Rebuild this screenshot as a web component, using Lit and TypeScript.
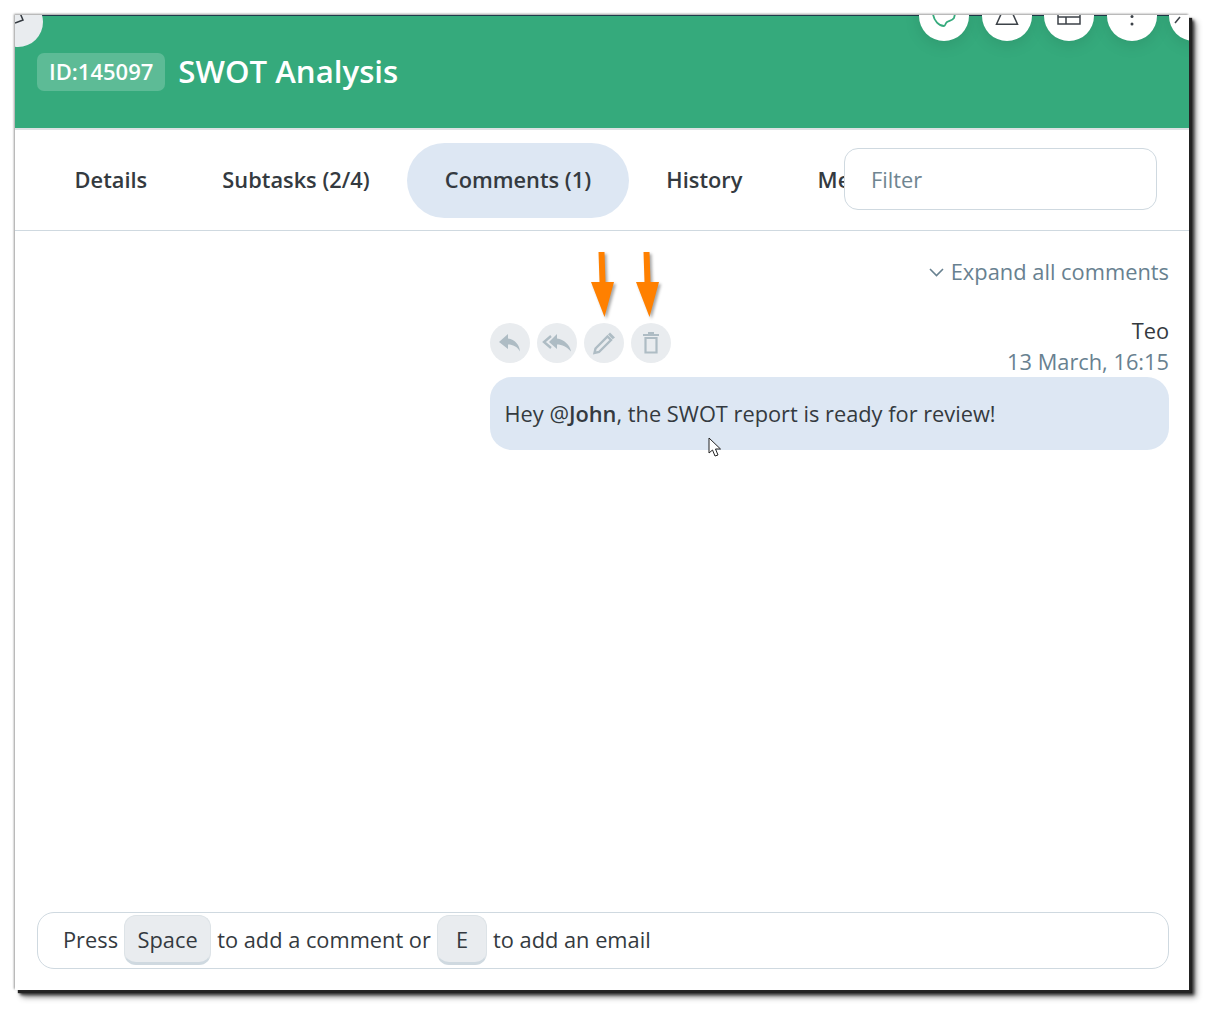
import { LitElement, html, css, svg } from "lit";
import { customElement } from "lit/decorators.js";

const circle = (cx: number, inner: unknown) => html`<span class="round" style="left:${cx}px">${inner}</span>`;

@customElement("app-root")
export class AppRoot extends LitElement {
  static styles = css`
    :host { display: block; height: 1017px; font-family: "Open Sans", sans-serif; color: #343a40; background: #fff; }
    * { box-sizing: border-box; }
    .stage { padding: 15px 27px 27px 15px; }
    .panel { position: relative; height: 975px; width: 1174px; display: flex; flex-direction: column; background: #fff; box-shadow: 3px 3px 1px #222, 5px 5px 3px #333, 7px 7px 6px rgba(0,0,0,.45), -1px -1px 2px rgba(0,0,0,.4); }
    .clip { position: absolute; inset: 0; overflow: hidden; display: flex; flex-direction: column; }
    .head { position: relative; height: 115px; flex: none; background: #35aa7c; border-top: 1px solid #1f3a4a; border-bottom: 2px solid #dde1e3; display: flex; align-items: center; padding: 0 22px 0 22px; gap: 13px; }
    .id { background: rgba(255,255,255,.2); border-radius: 7px; height: 38px; padding: 0 12px 2px; display: flex; align-items: center; color: #fff; font-size: 22px; font-weight: 600; }
    .title { color: #fff; font-size: 31.2px; font-weight: 600; margin: -2px 0 0; }
    .round { position: absolute; top: -25px; width: 50px; height: 50px; border-radius: 50%; background: #fff; display: flex; justify-content: center; align-items: flex-start; box-shadow: 0 4px 16px rgba(0,0,0,.1); }
    .back { position: absolute; left: -22px; top: -19px; width: 50px; height: 50px; border-radius: 50%; background: #e9ecef; }
    .back svg { position: absolute; left: 22px; top: 16px; }
    .tabs { position: relative; height: 101px; flex: none; border-bottom: 1px solid #cfd9e0; padding: 13px 0 0 22px; display: flex; overflow: hidden; }
    .tab { height: 75px; padding: 0 37.6px 2px; display: flex; align-items: center; font-size: 21.8px; font-weight: 600; border-radius: 38px; white-space: nowrap; flex: none; }
    .tab.on { background: #dde7f3; }
    .filter { position: absolute; left: 829px; top: 18px; width: 313px; height: 62px; background: #fff; border: 1px solid #cfd9e0; border-radius: 14px; padding-left: 26px; display: flex; align-items: center; font-size: 21.8px; color: #6f8591; }
    .body { flex: 1; position: relative; padding: 26px 20px 0 475px; min-height: 0; }
    .expand { display: flex; justify-content: flex-end; align-items: center; gap: 7px; color: #688190; font-size: 21.85px; line-height: 30px; }
    .meta { display: flex; justify-content: space-between; margin-top: 28px; height: 62px; }
    .acts { display: flex; gap: 7px; margin-top: 8px; }
    .act { width: 40px; height: 40px; border-radius: 50%; background: #e9ecef; display: flex; align-items: center; justify-content: center; }
    .act:last-child { margin-left: -0.5px; }
    .who { text-align: right; font-size: 21.8px; line-height: 31px; }
    .date { color: #688190; }
    .bubble { height: 73px; background: #dde7f3; border-radius: 22px; padding: 0 14.5px; display: flex; align-items: center; font-size: 21.8px; white-space: pre; }
    .bubble b { font-weight: 600; }
    .arrow { position: absolute; top: 20px; filter: drop-shadow(2px 2px 1.5px rgba(0,0,0,.35)); }
    .cursor { position: absolute; left: 693px; top: 206px; }
    .foot { flex: none; padding: 0 20px 21px 22px; }
    .input { height: 57px; border: 1px solid #cfd9e0; border-radius: 17px; padding: 0 0 2px 25px; display: flex; align-items: center; gap: 6px; font-size: 21.8px; white-space: nowrap; }
    kbd { font: inherit; height: 50px; background: #e9ecef; border: 1px solid #dde3e7; border-bottom: 3px solid #cfd9e0; border-radius: 12px; padding: 1px 12.5px 0; display: flex; align-items: center; }
    kbd.e { padding: 1px 18px 0; }
  `;

  private arrow(left: number) {
    return html`<svg class="arrow" style="left:${left}px" width="30" height="70" viewBox="0 0 30 70">
      <path d="M9.500 1 L15.500 1 L16.500 31 L25 31 L15.500 66 L2 31 L10.500 31 Z" fill="#ff8000"/></svg>`;
  }

  render() {
    const ic = "#aebcc4";
    return html`
      <div class="stage"><div class="panel"><div class="clip">
        <header class="head">
          <span class="back"><svg width="12" height="14" viewBox="0 0 12 14" fill="none" stroke="#343a40" stroke-width="1.500"><path d="M0 10 L8 7 L5 0"/></svg></span>
          ${circle(904, svg`<svg style="margin-top:23px" width="26" height="14" viewBox="0 0 26 14" fill="none" stroke="#35aa7c" stroke-width="1.800"><path d="M2 0 C3 7 8 12 13 12 C14.500 12 14 9.500 16 8 C18 6.500 21 7 23 4 L24 0"/></svg>`)}
          ${circle(967, svg`<svg style="margin-top:23px" width="24" height="14" viewBox="0 0 24 14" fill="none" stroke="#3c4248" stroke-width="1.500"><path d="M7 -2 L1.500 10.300 L22.500 10.300 L17 -2"/></svg>`)}
          ${circle(1029, svg`<svg style="margin-top:24px" width="24" height="10" viewBox="0 0 24 10" fill="none" stroke="#3c4248" stroke-width="1.500"><path d="M1 -2 V9 H23 V-2 M1 2 H23 M9 2 V9"/></svg>`)}
          ${circle(1092, svg`<svg style="margin-top:24px" width="6" height="12" viewBox="0 0 6 12" fill="#3c4248"><circle cx="3" cy="1.500" r="1.500"/><circle cx="3" cy="9" r="1.500"/></svg>`)}
          ${circle(1154, svg`<svg style="margin:25px 0 0 -32px" width="8" height="8" viewBox="0 0 8 8" fill="none" stroke="#3c4248" stroke-width="1.500"><path d="M1 7 L6 1"/></svg>`)}
          <span class="id">ID:145097</span>
          <h1 class="title">SWOT Analysis</h1>
        </header>
        <nav class="tabs">
          <div class="tab">Details</div>
          <div class="tab">Subtasks (2/4)</div>
          <div class="tab on">Comments (1)</div>
          <div class="tab">History</div>
          <div class="tab">Mentions</div>
          <div class="filter">Filter</div>
        </nav>
        <main class="body">
          <div class="expand">
            <svg width="15" height="9" viewBox="0 0 15 9" fill="none" stroke="#688190" stroke-width="1.600"><path d="M1 1 L7.500 7.500 L14 1"/></svg>
            <span>Expand all comments</span>
          </div>
          <div class="meta">
            <div class="acts">
              <span class="act"><svg width="24" height="20" viewBox="0 0 24 20" fill="${ic}"><path d="M10 1 L1 9 L10 16 V11.500 C15 11.500 19 13.500 22 18.500 C21.500 12 17 6.500 10 5.500 Z"/></svg></span>
              <span class="act"><svg width="32" height="20" viewBox="0 0 32 20" fill="${ic}"><path d="M16 1 L8 9 L16 16 V11.500 C21 11.500 26 14 30 18.500 C29 12 23 6.500 16 5.500 Z"/><path d="M10 3 L3 9 L10 15" fill="none" stroke="${ic}" stroke-width="2.400"/></svg></span>
              <span class="act"><svg width="24" height="24" viewBox="0 0 24 24" fill="none" stroke="${ic}" stroke-width="2.400"><path d="M3.500 17.500 L15.500 5.500 L19 9 L7 21 L2.500 22 Z"/><path d="M18 1.500 L23 6.500 L20.700 8.300 L16 3.500 Z" fill="${ic}" stroke="none"/></svg></span>
              <span class="act"><svg width="18" height="22" viewBox="0 0 18 22" fill="none" stroke="${ic}" stroke-width="2.200"><path d="M3.500 6 H14.500 V20.500 H3.500 Z"/><path d="M1 3 H17 M6 1 H12" stroke-width="1.800"/></svg></span>
            </div>
            <div class="who"><div>Teo</div><div class="date">13 March, 16:15</div></div>
          </div>
          <div class="bubble">Hey @<b>John</b>, the SWOT report is ready for review!</div>
          ${this.arrow(574)}
          ${this.arrow(619)}
          <svg class="cursor" width="16" height="22" viewBox="0 0 16 22"><path d="M1 1 V16 L4.500 13 L7 19 L10 18 L7.500 12 L12.500 12 Z" fill="#fff" stroke="#222" stroke-width="1"/></svg>
        </main>
        <footer class="foot">
          <div class="input"><span>Press</span><kbd>Space</kbd><span>to add a comment or</span><kbd class="e">E</kbd><span>to add an email</span></div>
        </footer>
      </div></div></div>
    `;
  }
}
